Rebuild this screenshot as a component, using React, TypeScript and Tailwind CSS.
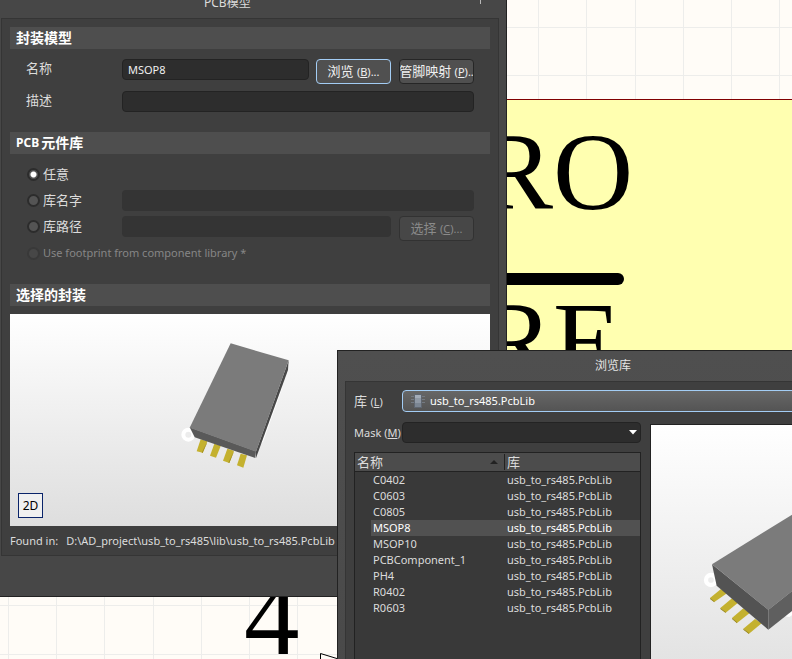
import React, { useState } from "react";

const FONT =
  "font-['Noto_Sans','Noto_Sans_CJK_SC',sans-serif] text-[11px] leading-4 text-[#dcdcdc]";

const FIELD =
  "h-[21px] min-w-0 rounded-[4px] border border-[#232323] bg-[#2d2d2d] px-[5px] text-[11px] text-[#f0f0f0] outline-none";

const FIELD_OFF = "h-[21px] min-w-0 rounded-[4px] bg-[#343434] px-[5px]";

const BUTTON =
  "flex h-[25px] w-[75px] shrink-0 items-center justify-center overflow-hidden whitespace-nowrap rounded-[4px] border";

const verticals = Array.from({ length: 40 }, (_, i) => Math.round(8 + i * 48.2));
const horizontals = Array.from({ length: 30 }, (_, i) => Math.round(27 + i * 48.2));

function Schematic() {
  return (
    <svg className="absolute inset-0 h-full w-full" aria-label="Schematic sheet">
      <g fill="#ededeb">
        {verticals.map((x) => (
          <rect key={x} x={x} y="0" width="1" height="100%" />
        ))}
        {horizontals.map((y) => (
          <rect key={y} x="0" y={y} width="100%" height="1" />
        ))}
      </g>
      <rect x="350.5" y="99.5" width="2000" height="500" fill="#ffffb0" stroke="#800000" />
      <g className="font-['Liberation_Serif',serif] text-[111px]" fill="#000">
        <text x="479" y="209">RO</text>
        <text x="479" y="378">RE</text>
        <text x="244" y="654">4</text>
      </g>
      <path d="M486 279H618" stroke="#000" strokeWidth="12" strokeLinecap="round" />
      <path d="M320.5 672V653.5L345 661" fill="none" stroke="#000" />
    </svg>
  );
}

function Hot({ children, tail = "" }: { children: string; tail?: string }) {
  return (
    <span className="text-[11px]">
      (<span className="underline underline-offset-1">{children}</span>){tail}
    </span>
  );
}

function SectionTitle({ children }: { children: React.ReactNode }) {
  return (
    <h2 className="flex h-[22px] items-center bg-[#4e4e4e] px-1.5 text-[14px] font-bold text-white">
      {children}
    </h2>
  );
}

function Radio({
  value,
  current,
  onPick,
  disabled,
  children,
}: {
  value: string;
  current: string;
  onPick: (v: string) => void;
  disabled?: boolean;
  children: string;
}) {
  return (
    <label
      className={
        disabled
          ? "flex items-center gap-[3px] text-[11px] text-[#868686]"
          : "flex w-[95px] shrink-0 items-center gap-[3px] text-[13px]"
      }
    >
      <input
        type="radio"
        name="library"
        value={value}
        checked={current === value}
        disabled={disabled}
        onChange={() => onPick(value)}
        className="size-[13px] shrink-0 appearance-none rounded-full border-2 border-[#2c2c2c] bg-[#545454] checked:bg-[radial-gradient(circle,#fff_0_2.5px,#545454_3.5px)] disabled:border-[#393939] disabled:bg-[#474747]"
      />
      {children}
    </label>
  );
}

function ChipUpright() {
  return (
    <svg width="180" height="150" viewBox="0 0 540 450" aria-label="MSOP8 3D model">
      <path d="M372 160L309 336L290 350Z" fill="#fff" />
      <circle cx="85" cy="314" r="15" fill="none" stroke="#fff" strokeWidth="12" />
      <g fill="#c4b12f">
        <path d="M122 328L142 334L128 368L110 364Z" />
        <path d="M163 341L183 346L168 383L150 377Z" />
        <path d="M202 356L222 362L208 399L189 392Z" />
        <path d="M242 371L261 376L250 413L231 406Z" />
        <path d="M142 334L140 342L128 369L125 368Z" fill="#a5901e" />
        <path d="M222 362L220 370L208 399L205 398Z" fill="#a5901e" />
      </g>
      <path d="M89 292L288 364L286 384L104 322Z" fill="#595959" />
      <path d="M386 91L384 120L288 384L288 364Z" fill="#484848" />
      <path d="M212 40L386 91L288 365L89 293Z" fill="#7b7b7b" />
    </svg>
  );
}

function ChipTilted() {
  return (
    <svg width="220" height="169" viewBox="33 0 660 507" className="mt-16 shrink-0" aria-label="Footprint 3D model">
      <circle cx="213" cy="273" r="15" fill="none" stroke="#fff" strokeWidth="13" />
      <path d="M425 380L600 262V280L448 384Z" fill="#fff" />
      <g fill="#c4b12f">
        <path d="M243 300L262 312L223 339L210 327Z" />
        <path d="M276 328L296 340L257 371L241 357Z" />
        <path d="M310 358L330 371L291 402L276 387Z" />
        <path d="M345 390L365 403L327 434L310 419Z" />
        <path d="M210 327L223 337V340L210 330ZM241 357L257 369V372L241 360ZM276 387L291 400V403L276 390ZM310 419L327 432V435L310 422Z" fill="#94821c" />
      </g>
      <path d="M216 226L385 362V422L230 290Z" fill="#535353" />
      <path d="M385 362L640 160V222L385 422Z" fill="#5f5f5f" />
      <path d="M216 226L480 62L640 160L385 363Z" fill="#7b7b7b" />
    </svg>
  );
}

function ModelDialog() {
  const [library, setLibrary] = useState("any");
  return (
    <section className="absolute -left-[7px] -top-3 w-[514px] border-b border-r border-[#222] bg-[#474747] pb-10 pl-2 pr-[7px]">
      <header className="flex h-[30px] items-center justify-between pl-[203px] pr-[18px] text-[12px]">
        <h1>PCB模型</h1>
        <span className="h-4 w-px -translate-y-[7px] bg-[#b8b8b8]" />
      </header>
      <div className="border border-[#353535] bg-[#3f3f3f] p-2 pb-1.5">
        <SectionTitle>封装模型</SectionTitle>
        <div className="flex flex-col gap-[7px] py-[10px] pl-4 pr-4">
          <div className="flex items-start">
            <label htmlFor="name" className="w-24 text-[13px] leading-[18px]">名称</label>
            <input id="name" defaultValue="MSOP8" className={`${FIELD} mr-[7px] flex-1`} />
            <button className={`${BUTTON} mr-2 border-[#a3cdf5] bg-[#505050] text-[13px] text-[#f0f0f0]`}>
              <span>浏览 <Hot tail="...">B</Hot></span>
            </button>
            <button className={`${BUTTON} border-[#262626] bg-[#505050] text-[13px] text-[#f0f0f0]`}>
              <span>管脚映射 <Hot tail="..">P</Hot></span>
            </button>
          </div>
          <div className="flex items-start">
            <label htmlFor="desc" className="w-24 text-[13px] leading-[18px]">描述</label>
            <input id="desc" className={`${FIELD} flex-1`} />
          </div>
        </div>
        <div className="mt-[10px]">
          <SectionTitle><span className="mr-0.5 text-[12px]">PCB</span>元件库</SectionTitle>
        </div>
        <div className="flex flex-col pl-[17px] pr-4 pt-[7px]">
          <div className="flex h-[26px] items-center">
            <Radio value="any" current={library} onPick={setLibrary}>任意</Radio>
          </div>
          <div className="flex h-[26px] items-center">
            <Radio value="name" current={library} onPick={setLibrary}>库名字</Radio>
            <input aria-label="库名字" disabled className={`${FIELD_OFF} flex-1`} />
          </div>
          <div className="flex h-[26px] items-center">
            <Radio value="path" current={library} onPick={setLibrary}>库路径</Radio>
            <div className="flex h-[21px] flex-1 items-start">
              <input aria-label="库路径" disabled className={`${FIELD_OFF} mr-2 flex-1`} />
              <button disabled className={`${BUTTON} border-[#323232] bg-[#474747] text-[13px] text-[#8a8a8a]`}>
                <span>选择 <Hot tail="...">C</Hot></span>
              </button>
            </div>
          </div>
          <div className="flex h-7 items-center">
            <Radio value="component" current={library} onPick={setLibrary} disabled>
              Use footprint from component library *
            </Radio>
          </div>
        </div>
        <div className="mt-[17px]">
          <SectionTitle>选择的封装</SectionTitle>
        </div>
        <div className="relative mt-2 h-[212px] bg-linear-to-b from-white to-[#dedede] pl-[150px] pt-4">
          <ChipUpright />
          <button className="absolute bottom-2 left-2 size-[25px] border border-[#0a246a] bg-[#f0f0f0] text-[12px] text-black">
            2D
          </button>
        </div>
        <p className="mt-[7px] flex gap-2 whitespace-nowrap">
          <span>Found in:</span>
          <span>D:\AD_project\usb_to_rs485\lib\usb_to_rs485.PcbLib</span>
        </p>
      </div>
    </section>
  );
}

const footprints = ["C0402", "C0603", "C0805", "MSOP8", "MSOP10", "PCBComponent_1", "PH4", "R0402", "R0603"];

function BrowseDialog() {
  const [selected, setSelected] = useState("MSOP8");
  return (
    <section className="absolute left-[337px] top-[350px] flex h-[460px] w-[552px] flex-col border border-[#222] bg-linear-to-b from-[#4f4f4f] to-[#474747] px-[7px] pb-2">
      <header className="flex h-[30px] shrink-0 items-center justify-center text-[12px] text-[#e4e4e4]">
        <h1>浏览库</h1>
      </header>
      <div className="flex min-h-0 flex-1 flex-col border border-[#353535] bg-[#3f3f3f] p-2">
        <div className="flex items-center">
          <label htmlFor="lib" className="w-12 shrink-0 text-[13px]">库 <Hot>L</Hot></label>
          <div className="relative flex-1">
            <select
              id="lib"
              className="block h-[22px] w-full appearance-none rounded-[4px] border border-[#a3cdf5] bg-linear-to-b from-[#676767] to-[#545454] pl-[27px] text-[11px] text-white outline-none"
            >
              <option>usb_to_rs485.PcbLib</option>
            </select>
            <svg className="pointer-events-none absolute left-[9px] top-1" width="14" height="14" viewBox="0 0 14 14" aria-hidden="true">
              <path d="M0 2.5H14M0 5.5H14M0 8.5H14" stroke="#747a82" />
              <rect x="3" y="0" width="8" height="14" fill="#5f6670" />
              <rect x="4" y="1" width="6" height="12" fill="#8f98a4" />
              <rect x="4" y="1" width="6" height="3" fill="#a3acb8" />
              <rect x="4" y="9" width="6" height="4" fill="#7b8592" />
            </svg>
          </div>
        </div>
        <div className="mt-[10px] flex min-h-0 flex-1 gap-[9px]">
          <div className="flex w-[287px] shrink-0 flex-col">
            <div className="flex items-center">
              <label htmlFor="mask" className="w-12 shrink-0 whitespace-nowrap">Mask <Hot>M</Hot></label>
              <div className="relative flex-1">
                <select id="mask" className={`${FIELD} block w-full appearance-none`}>
                  <option></option>
                </select>
                <svg className="pointer-events-none absolute right-1 top-2" width="8" height="5" viewBox="0 0 8 5" aria-hidden="true">
                  <path d="M0 0H8L4 4.5Z" fill="#fff" />
                </svg>
              </div>
            </div>
            <div className="mt-[9px] flex-1 border border-[#222] bg-[#393939]">
              <table className="w-full table-fixed border-collapse text-left">
                <colgroup>
                  <col className="w-4" />
                  <col className="w-[134px]" />
                  <col />
                </colgroup>
                <thead>
                  <tr className="h-[18px] border-b border-[#222] bg-[#4c4c4c] text-[13px]">
                    <th colSpan={2} className="p-0 pl-0.5 font-normal">
                      <span className="flex items-center justify-between border-r border-[#222] pr-1.5">
                        名称
                        <svg width="8" height="4" viewBox="0 0 8 4" aria-hidden="true">
                          <path d="M4 0L8 4H0Z" fill="#222" />
                        </svg>
                      </span>
                    </th>
                    <th className="p-0 pl-0.5 font-normal">库</th>
                  </tr>
                </thead>
                <tbody>
                  {footprints.map((name) => {
                    const tone = selected === name ? "bg-[#515151] text-white" : "";
                    return (
                      <tr key={name} className="h-4" onClick={() => setSelected(name)}>
                        <td className="p-0" />
                        <td className={`p-0 pl-0.5 ${tone}`}>{name}</td>
                        <td className={`p-0 pl-0.5 ${tone}`}>usb_to_rs485.PcbLib</td>
                      </tr>
                    );
                  })}
                </tbody>
              </table>
            </div>
          </div>
          <div className="mt-0.5 min-w-0 flex-1 overflow-hidden border border-[#222] bg-linear-to-b from-white to-[#d4d4d4]">
            <ChipTilted />
          </div>
        </div>
      </div>
    </section>
  );
}

export default function App() {
  return (
    <main className={`relative h-screen w-full overflow-hidden bg-[#fffcf7] ${FONT}`}>
      <Schematic />
      <ModelDialog />
      <BrowseDialog />
    </main>
  );
}
